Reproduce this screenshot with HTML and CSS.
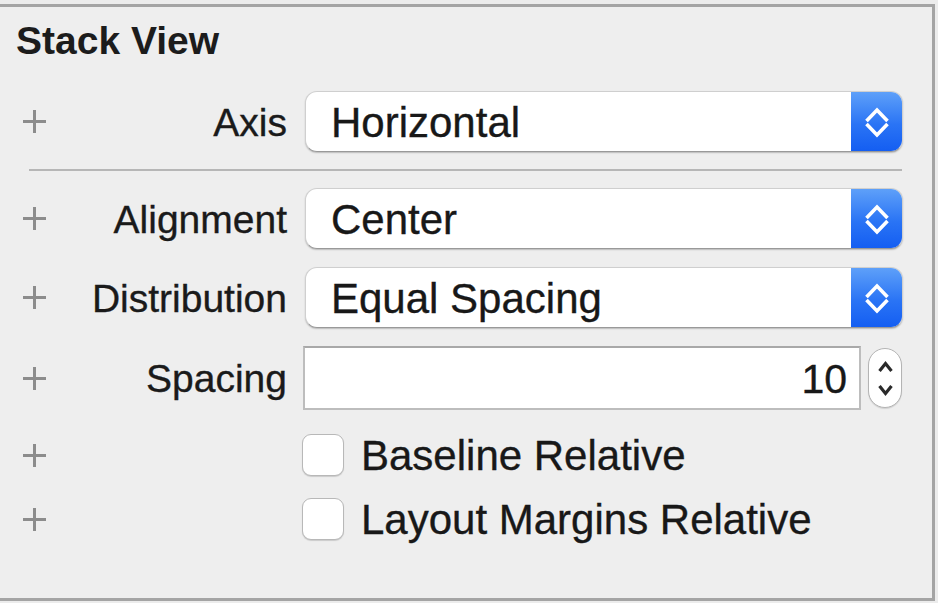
FILE: index.html
```html
<!DOCTYPE html>
<html>
<head>
<meta charset="utf-8">
<link rel="stylesheet" href="styles.css">
</head>
<body>
<div class="panel">
  <h1 class="title">Stack View</h1>

  <div class="row row-axis">
    <svg class="plus" viewBox="0 0 25 25"><path d="M12.5 1V24M1 12.5H24"/></svg>
    <div class="label">Axis</div>
    <div class="popup">
      <div class="popup-value">Horizontal</div>
      <div class="popup-btn">
        <svg viewBox="0 0 24 36"><path d="M1.5 17L12 6L22.5 17M1.5 20L12 31L22.5 20"/></svg>
      </div>
    </div>
  </div>

  <div class="sep"></div>

  <div class="row row-align">
    <svg class="plus" viewBox="0 0 25 25"><path d="M12.5 1V24M1 12.5H24"/></svg>
    <div class="label">Alignment</div>
    <div class="popup">
      <div class="popup-value">Center</div>
      <div class="popup-btn">
        <svg viewBox="0 0 24 36"><path d="M1.5 17L12 6L22.5 17M1.5 20L12 31L22.5 20"/></svg>
      </div>
    </div>
  </div>

  <div class="row row-dist">
    <svg class="plus" viewBox="0 0 25 25"><path d="M12.5 1V24M1 12.5H24"/></svg>
    <div class="label">Distribution</div>
    <div class="popup">
      <div class="popup-value">Equal Spacing</div>
      <div class="popup-btn">
        <svg viewBox="0 0 24 36"><path d="M1.5 17L12 6L22.5 17M1.5 20L12 31L22.5 20"/></svg>
      </div>
    </div>
  </div>

  <div class="row row-spacing">
    <svg class="plus" viewBox="0 0 25 25"><path d="M12.5 1V24M1 12.5H24"/></svg>
    <div class="label">Spacing</div>
    <div class="field">10</div>
    <div class="stepper">
      <svg viewBox="0 0 31 57"><path d="M9.5 21L15.5 13.5L21.5 21M9.5 36L15.5 43.5L21.5 36"/></svg>
    </div>
  </div>

  <div class="row row-check1">
    <svg class="plus" viewBox="0 0 25 25"><path d="M12.5 1V24M1 12.5H24"/></svg>
    <div class="label"></div>
    <div class="checkbox"></div>
    <div class="check-label">Baseline Relative</div>
  </div>

  <div class="row row-check2">
    <svg class="plus" viewBox="0 0 25 25"><path d="M12.5 1V24M1 12.5H24"/></svg>
    <div class="label"></div>
    <div class="checkbox"></div>
    <div class="check-label">Layout Margins Relative</div>
  </div>
</div>
</body>
</html>
```

FILE: styles.css
```css
html, body {
  margin: 0;
  padding: 0;
  background: #ececec;
}

body {
  font-family: "Liberation Sans", Arial, sans-serif;
  color: #1e1e1e;
  width: 938px;
  height: 603px;
  overflow: hidden;
}

.panel {
  box-sizing: border-box;
  margin-top: 4px;
  width: 935px;
  height: 597px;
  border-top: 3px solid #a4a4a4;
  border-right: 3px solid #a4a4a4;
  border-bottom: 3px solid #a4a4a4;
  background: #eeeeee;
  display: flex;
  flex-direction: column;
}

.title {
  margin: 12px 0 0 16px;
  font-size: 39px;
  line-height: 44px;
  height: 44px;
  font-weight: bold;
  color: #1c1c1c;
}

.row {
  display: flex;
  align-items: center;
  padding-left: 22px;
  flex: none;
}

.row-axis { margin-top: 28px; height: 61px; }
.row-align { margin-top: 17px; height: 61px; }
.row-dist { margin-top: 18px; height: 61px; }
.row-spacing { margin-top: 18px; height: 64px; }
.row-check1 { margin-top: 24px; height: 42px; }
.row-check2 { margin-top: 22px; height: 42px; }

.plus {
  width: 25px;
  height: 25px;
  flex: none;
  fill: none;
  stroke: #8c8c8c;
  stroke-width: 3;
}

.label {
  width: 240px;
  flex: none;
  text-align: right;
  font-size: 39px;
  line-height: 44px;
  padding-top: 2px;
  color: #1a1a1a;
  -webkit-text-stroke: 0.35px #1a1a1a;
}

.popup {
  box-sizing: border-box;
  margin-left: 18px;
  width: 598px;
  height: 61px;
  display: flex;
  border-radius: 12px;
  background: #fff;
  border: 1px solid #cfcfcf;
  border-bottom-color: #999;
  box-shadow: 0 1px 1.5px rgba(0, 0, 0, 0.22);
  overflow: hidden;
}

.popup-value {
  flex: 1;
  padding-left: 25px;
  font-size: 42px;
  line-height: 59px;
  padding-top: 1px;
  color: #181818;
  -webkit-text-stroke: 0.35px #181818;
}

.popup-btn {
  width: 51px;
  flex: none;
  background: linear-gradient(#5ea0f9, #2a74f5 55%, #145ef2);
  display: flex;
  align-items: center;
  justify-content: center;
}

.popup-btn svg {
  width: 24px;
  height: 36px;
  fill: none;
  stroke: #fff;
  stroke-width: 3.6;
}

.field {
  box-sizing: border-box;
  margin-left: 16px;
  width: 558px;
  height: 64px;
  background: #fff;
  border: 2px solid #bdbdbd;
  border-top-color: #a9a9a9;
  text-align: right;
  padding-right: 12px;
  font-size: 41px;
  line-height: 60px;
  padding-top: 1px;
  color: #181818;
  -webkit-text-stroke: 0.35px #181818;
}

.stepper {
  box-sizing: border-box;
  margin-left: 7px;
  width: 34px;
  height: 60px;
  border-radius: 17px;
  background: #fff;
  border: 1.5px solid #b4b4b4;
  box-shadow: 0 1px 1px rgba(0, 0, 0, 0.12);
  display: flex;
  align-items: center;
  justify-content: center;
}

.stepper svg {
  width: 31px;
  height: 57px;
  flex: none;
  fill: none;
  stroke: #2a2a2a;
  stroke-width: 3.2;
}

.checkbox {
  box-sizing: border-box;
  margin-left: 15px;
  width: 42px;
  height: 42px;
  flex: none;
  border-radius: 9px;
  background: #fff;
  border: 1.5px solid #b8b8b8;
  box-shadow: 0 1px 1px rgba(0, 0, 0, 0.15);
}

.check-label {
  margin-left: 17px;
  font-size: 42px;
  line-height: 46px;
  padding-top: 2px;
  color: #181818;
  -webkit-text-stroke: 0.35px #181818;
  white-space: nowrap;
}

.sep {
  margin: 17px 30px 0 29px;
  height: 2px;
  flex: none;
  background: #b6b6b6;
}
```
